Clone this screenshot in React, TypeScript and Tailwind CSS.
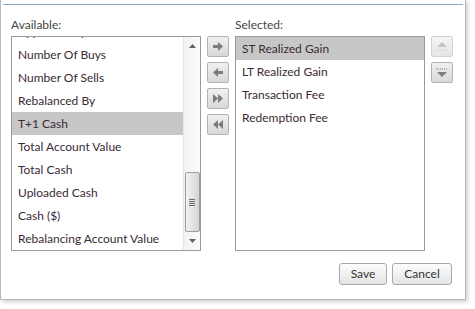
import type { ReactNode } from 'react';

const available = [
    'Approved By',
    'Number Of Buys',
    'Number Of Sells',
    'Rebalanced By',
    'T+1 Cash',
    'Total Account Value',
    'Total Cash',
    'Uploaded Cash',
    'Cash ($)',
    'Rebalancing Account Value',
];

const selected = ['ST Realized Gain', 'LT Realized Gain', 'Transaction Fee', 'Redemption Fee'];

function Row({ label, active }: { label: string; active?: boolean }) {
    return (
        <div
            className={`h-[23px] leading-[23px] pl-[6px] whitespace-nowrap text-[#3a2a36] ${
                active ? 'bg-[#c7c7c7]' : ''
            }`}
        >
            {label}
        </div>
    );
}

function MoveButton({ children, disabled }: { children: ReactNode; disabled?: boolean }) {
    return (
        <button
            className={`w-[22px] h-[21px] flex items-center justify-center rounded-[2px] border ${
                disabled
                    ? 'border-[#d4d4d4] bg-gradient-to-b from-[#f4f4f4] to-[#e6e6e6] text-[#c4c4c4]'
                    : 'border-[#b4b4b4] bg-gradient-to-b from-[#f0f0f0] to-[#d8d8d8] text-[#7c7c7c]'
            }`}
        >
            {children}
        </button>
    );
}

function ArrowRight() {
    return (
        <svg width="10" height="9" viewBox="0 0 10 9">
            <path d="M0 3h5V0l5 4.5L5 9V6H0z" fill="currentColor" />
        </svg>
    );
}

function ArrowLeft() {
    return (
        <svg width="10" height="9" viewBox="0 0 10 9">
            <path d="M10 3H5V0L0 4.5 5 9V6h5z" fill="currentColor" />
        </svg>
    );
}

function DoubleRight() {
    return (
        <svg width="10" height="9" viewBox="0 0 10 9">
            <path d="M0 0l5 4.5L0 9zM5 0l5 4.5L5 9z" fill="currentColor" />
        </svg>
    );
}

function DoubleLeft() {
    return (
        <svg width="10" height="9" viewBox="0 0 10 9">
            <path d="M10 0L5 4.5 10 9zM5 0L0 4.5 5 9z" fill="currentColor" />
        </svg>
    );
}

function MoveUp() {
    return (
        <svg width="12" height="9" viewBox="0 0 12 9">
            <path d="M6 0l5 5H1z" fill="currentColor" />
            <path d="M0 8h12" stroke="currentColor" strokeDasharray="1 1" />
        </svg>
    );
}

function MoveDown() {
    return (
        <svg width="12" height="9" viewBox="0 0 12 9">
            <path d="M0 1h12" stroke="currentColor" strokeDasharray="1 1" />
            <path d="M6 9L1 4h10z" fill="currentColor" />
        </svg>
    );
}

function Scrollbar() {
    return (
        <div className="w-[17px] h-full flex flex-col items-center border-l border-[#e6e6e6] bg-gradient-to-r from-[#f2f2f2] to-[#fbfbfb]">
            <div className="h-[16px] flex items-center justify-center pt-[2px]">
                <svg width="7" height="4" viewBox="0 0 7 4">
                    <path d="M3.5 0L7 4H0z" fill="#606060" />
                </svg>
            </div>
            {/* track above thumb */}
            <div className="flex-1" />
            <div className="w-[15px] h-[60px] rounded-[2px] border border-[#9c9c9c] bg-gradient-to-r from-[#f2f2f2] via-[#e4e4e4] to-[#d4d4d4] flex flex-col items-center justify-center gap-[1px]">
                <div className="w-[6px] h-[1px] bg-[#6a6a6a]" />
                <div className="w-[6px] h-[1px] bg-[#6a6a6a]" />
                <div className="w-[6px] h-[1px] bg-[#6a6a6a]" />
                <div className="w-[6px] h-[1px] bg-[#6a6a6a]" />
            </div>
            <div className="h-[18px] flex items-center justify-center">
                <svg width="7" height="4" viewBox="0 0 7 4">
                    <path d="M3.5 4L7 0H0z" fill="#606060" />
                </svg>
            </div>
        </div>
    );
}

export default function App() {
    return (
        <div
            className="w-[475px] h-[309px] bg-white overflow-hidden text-[12px]"
            style={{ fontFamily: '"Segoe UI", Lato, sans-serif' }}
        >
            <div className="w-[466px] h-[300px] border-l border-r border-b border-[#b8b8b8] bg-white shadow-[2px_2px_4px_rgba(0,0,0,0.18)] flex flex-col">
                {/* Header rule */}
                <div className="mt-[4px] mx-[2px] h-[1px] bg-[#8fa6c6]" />

                {/* Pickers */}
                <div className="flex gap-[6px] pl-[10px] pt-[12px]">
                    <div className="w-[190px] flex flex-col">
                        <div className="h-[16px] leading-[16px] text-[#454545] mb-[3px]">Available:</div>
                        <div className="h-[215px] border border-[#9a9a9a] flex overflow-hidden">
                            <div className="flex-1 overflow-hidden">
                                <div className="-mt-[17px]">
                                    {available.map((item) => (
                                        <Row key={item} label={item} active={item === 'T+1 Cash'} />
                                    ))}
                                </div>
                            </div>
                            <Scrollbar />
                        </div>
                    </div>

                    <div className="flex flex-col gap-[5px] pt-[19px]">
                        <MoveButton>
                            <ArrowRight />
                        </MoveButton>
                        <MoveButton>
                            <ArrowLeft />
                        </MoveButton>
                        <MoveButton>
                            <DoubleRight />
                        </MoveButton>
                        <MoveButton>
                            <DoubleLeft />
                        </MoveButton>
                    </div>

                    <div className="w-[190px] flex flex-col">
                        <div className="h-[16px] leading-[16px] text-[#454545] mb-[3px]">Selected:</div>
                        <div className="h-[215px] border border-[#9a9a9a] overflow-hidden">
                            {selected.map((item) => (
                                <Row key={item} label={item} active={item === 'ST Realized Gain'} />
                            ))}
                        </div>
                    </div>

                    <div className="flex flex-col gap-[5px] pt-[19px]">
                        <MoveButton disabled>
                            <MoveUp />
                        </MoveButton>
                        <MoveButton>
                            <MoveDown />
                        </MoveButton>
                    </div>
                </div>

                {/* Footer */}
                <div className="flex justify-end gap-[5px] pr-[13px] mt-[12px]">
                    <button className="w-[48px] h-[22px] rounded-[3px] border border-[#a8a8a8] bg-gradient-to-b from-[#fdfdfd] to-[#e4e4e4] text-[#333]">
                        Save
                    </button>
                    <button className="w-[60px] h-[22px] rounded-[3px] border border-[#a8a8a8] bg-gradient-to-b from-[#fdfdfd] to-[#e4e4e4] text-[#333]">
                        Cancel
                    </button>
                </div>
            </div>
        </div>
    );
}
